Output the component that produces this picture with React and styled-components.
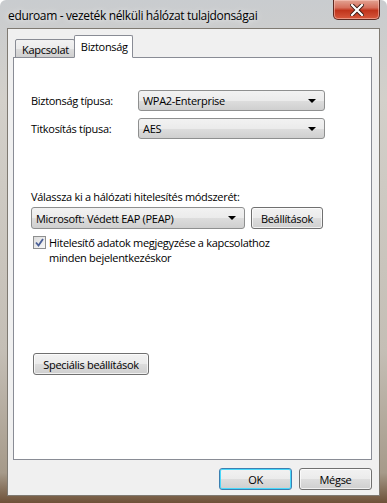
import React from 'react';
import styled, { createGlobalStyle } from 'styled-components';

const Global = createGlobalStyle`
  html, body { margin: 0; padding: 0; }
  body {
    font-family: "Open Sans", "Noto Sans", sans-serif;
    font-size: 11px;
    letter-spacing: -0.3px;
    color: #000;
  }
`;

const Window = styled.div`
  width: 387px;
  height: 503px;
  box-sizing: border-box;
  display: flex;
  flex-direction: column;
  padding: 0 7px 7px 7px;
  background: linear-gradient(to bottom, #c9cccf 0%, #d3d0ca 20%, #c4beb5 70%, #a69a8a 94%, #6e5138 100%);
  border-radius: 6px 6px 0 0;
`;

const TitleBar = styled.div`
  height: 28px;
  display: flex;
  align-items: flex-start;
  justify-content: space-between;
`;

const Title = styled.div`
  padding: 7px 0 0 1px;
  font-size: 12px;
  letter-spacing: -0.35px;
  color: #000;
  text-shadow: 0 0 6px rgba(255, 255, 255, 0.9);
`;

const CloseButton = styled.div`
  width: 47px;
  height: 20px;
  box-sizing: border-box;
  border: 1px solid #5e2a22;
  border-top: none;
  border-radius: 0 0 5px 5px;
  background: linear-gradient(to bottom, #e2a393 0%, #d6705d 40%, #c0341c 55%, #d7583d 100%);
  box-shadow: inset 0 0 0 1px rgba(255, 210, 200, 0.5);
  display: flex;
  align-items: center;
  justify-content: center;
`;

const Client = styled.div`
  flex: 1;
  background: #f0f0f0;
  border: 1px solid #7f7a72;
  display: flex;
  flex-direction: column;
  padding: 6px 7px 0 5px;
`;

const TabStrip = styled.div`
  display: flex;
  align-items: flex-end;
  padding-left: 2px;
  height: 23px;
  position: relative;
  z-index: 1;
`;

const Tab = styled.div`
  height: ${({ active }) => (active ? '23px' : '19px')};
  box-sizing: border-box;
  padding: ${({ active }) => (active ? '3px 4px 0 6px' : '2px 5px 0 6px')};
  border: 1px solid #898c95;
  border-bottom: ${({ active }) => (active ? '1px solid #fff' : '1px solid #898c95')};
  margin-left: ${({ active }) => (active ? '-1px' : '0')};
  background: ${({ active }) =>
    active ? '#fff' : 'linear-gradient(to bottom, #f2f2f2 0%, #ebebeb 50%, #dddddd 51%, #cfcfcf 100%)'};
  border-radius: 2px 2px 0 0;
`;

const Panel = styled.div`
  height: 403px;
  margin-top: -1px;
  box-sizing: border-box;
  background: #fff;
  border: 1px solid #898c95;
  padding: 32px 0 0 17px;
  display: flex;
  flex-direction: column;
`;

const FieldRow = styled.div`
  display: flex;
  align-items: center;
  height: 21px;
  margin-bottom: ${({ gap }) => gap || 0}px;
`;

const Label = styled.div`
  width: 107px;
`;

const Combo = styled.div`
  width: ${({ w }) => w}px;
  height: ${({ h }) => h || 21}px;
  box-sizing: border-box;
  border: 1px solid #8e8f8f;
  border-radius: 3px;
  background: linear-gradient(to bottom, #f2f2f2 0%, #ebebeb 50%, #dddddd 51%, #cfcfcf 100%);
  display: flex;
  align-items: center;
  justify-content: space-between;
  padding: 0 8px 0 4px;
`;

const Arrow = styled.span`
  width: 0;
  height: 0;
  border-left: 4px solid transparent;
  border-right: 4px solid transparent;
  border-top: 4px solid #000;
`;

const MethodLabel = styled.div`
  margin-top: 50px;
  line-height: 16px;
`;

const MethodRow = styled.div`
  display: flex;
  gap: 6px;
  margin-top: 2px;
`;

const Button = styled.div`
  width: ${({ w }) => w}px;
  height: ${({ h }) => h || 22}px;
  box-sizing: border-box;
  border: 1px solid ${({ primary }) => (primary ? '#3c7fb1' : '#707070')};
  border-radius: 3px;
  background: linear-gradient(to bottom, #f2f2f2 0%, #ebebeb 50%, #dddddd 51%, #cfcfcf 100%);
  box-shadow: ${({ primary }) =>
    primary ? 'inset 0 0 0 1px #48d8fb' : 'inset 0 0 0 1px rgba(255,255,255,0.7)'};
  display: flex;
  align-items: center;
  justify-content: center;
`;

const CheckRow = styled.div`
  display: flex;
  align-items: flex-start;
  gap: 3px;
  margin-top: 6px;
  padding-left: 2px;
  line-height: 15px;
`;

const Box = styled.div`
  width: 13px;
  height: 13px;
  flex: none;
  box-sizing: border-box;
  margin-top: 1px;
  border: 1px solid #8e8f8f;
  background: linear-gradient(135deg, #dcdcdc 0%, #f8f8f8 100%);
  display: flex;
  align-items: center;
  justify-content: center;
`;

const AdvancedButton = styled(Button)`
  margin: 88px 0 0 2px;
`;

const Footer = styled.div`
  flex: 1;
  display: flex;
  justify-content: flex-end;
  align-items: flex-start;
  gap: 7px;
  padding-top: 8px;
`;

const App = () => (
  <>
    <Global />
    <Window>
      <TitleBar>
        <Title>eduroam - vezeték nélküli hálózat tulajdonságai</Title>
        <CloseButton>
          <svg width="14" height="12" viewBox="0 0 14 12">
            <path d="M2 1 L12 11 M12 1 L2 11" stroke="#3a1a14" strokeWidth="4" strokeLinecap="square" />
            <path d="M2 1 L12 11 M12 1 L2 11" stroke="#fff" strokeWidth="2.2" strokeLinecap="square" />
          </svg>
        </CloseButton>
      </TitleBar>
      <Client>
        <TabStrip>
          <Tab>Kapcsolat</Tab>
          <Tab active>Biztonság</Tab>
        </TabStrip>
        <Panel>
          <FieldRow gap={7}>
            <Label>Biztonság típusa:</Label>
            <Combo w={187}>
              <span>WPA2-Enterprise</span>
              <Arrow />
            </Combo>
          </FieldRow>
          <FieldRow>
            <Label>Titkosítás típusa:</Label>
            <Combo w={187}>
              <span>AES</span>
              <Arrow />
            </Combo>
          </FieldRow>
          <MethodLabel>Válassza ki a hálózati hitelesítés módszerét:</MethodLabel>
          <MethodRow>
            <Combo w={214} h={22}>
              <span>Microsoft: Védett EAP (PEAP)</span>
              <Arrow />
            </Combo>
            <Button w={72}>Beállítások</Button>
          </MethodRow>
          <CheckRow>
            <Box>
              <svg width="9" height="9" viewBox="0 0 9 9">
                <path d="M1 4.5 L3.5 7.5 L8 1" fill="none" stroke="#4a5f97" strokeWidth="1.8" />
              </svg>
            </Box>
            <div>
              Hitelesítő adatok megjegyzése a kapcsolathoz
              <br />
              minden bejelentkezéskor
            </div>
          </CheckRow>
          <AdvancedButton w={116} h={22}>Speciális beállítások</AdvancedButton>
        </Panel>
        <Footer>
          <Button w={73} primary>OK</Button>
          <Button w={73}>Mégse</Button>
        </Footer>
      </Client>
    </Window>
  </>
);

export default App;
